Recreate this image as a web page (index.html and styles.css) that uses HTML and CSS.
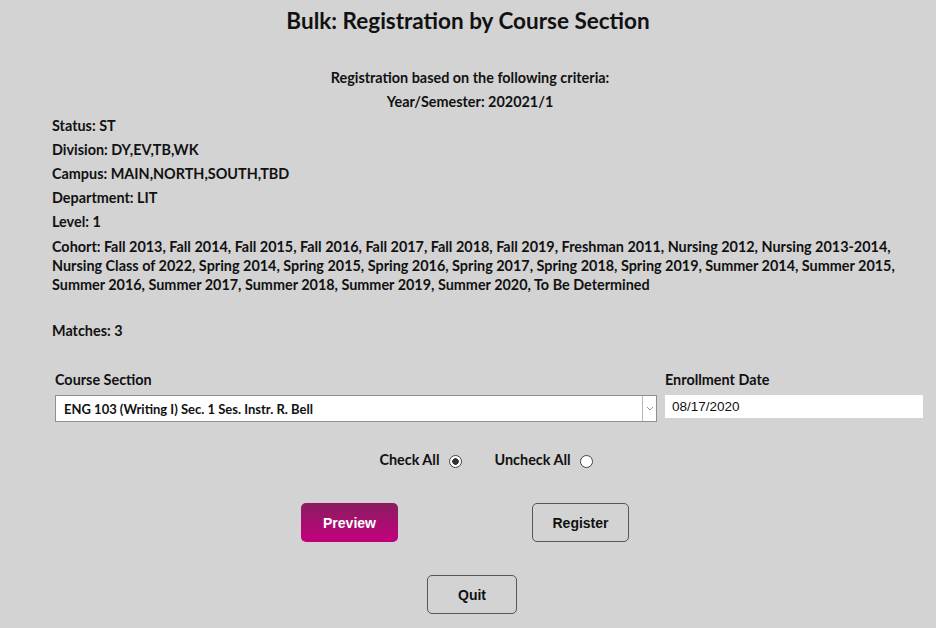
FILE: index.html
```html
<!DOCTYPE html>
<html lang="en">
<head>
<meta charset="UTF-8">
<meta name="viewport" content="width=device-width, initial-scale=1.0">
<title>Bulk: Registration by Course Section</title>
<link rel="stylesheet" href="styles.css">
</head>
<body>

<h1 class="title">Bulk: Registration by Course Section</h1>

<div class="page">
    <div class="criteria">
        <p class="center">Registration based on the following criteria:</p>
        <p class="center">Year/Semester: 202021/1</p>
        <p>Status: ST</p>
        <p>Division: DY,EV,TB,WK</p>
        <p>Campus: MAIN,NORTH,SOUTH,TBD</p>
        <p>Department: LIT</p>
        <p>Level: 1</p>
        <p class="cohort">Cohort: Fall 2013, Fall 2014, Fall 2015, Fall 2016, Fall 2017, Fall 2018, Fall 2019, Freshman 2011, Nursing 2012, Nursing 2013-2014, Nursing Class of 2022, Spring 2014, Spring 2015, Spring 2016, Spring 2017, Spring 2018, Spring 2019, Summer 2014, Summer 2015, Summer 2016, Summer 2017, Summer 2018, Summer 2019, Summer 2020, To Be Determined</p>
        <p class="matches">Matches: 3</p>
    </div>

    <form class="reg-form">
        <div class="fields">
            <div class="field field-section">
                <label for="section">Course Section</label>
                <div class="select-wrap">
                    <select id="section">
                        <option>ENG 103 (Writing I) Sec. 1 Ses. Instr. R. Bell</option>
                    </select>
                    <span class="select-arrow">
                        <svg width="8" height="5" viewBox="0 0 8 5"><path d="M1 1 L4 4 L7 1" fill="none" stroke="#9a9a9a" stroke-width="1"/></svg>
                    </span>
                </div>
            </div>
            <div class="field field-date">
                <label for="enrollDate">Enrollment Date</label>
                <input type="text" id="enrollDate" value="08/17/2020">
            </div>
        </div>

        <div class="checks">
            <label class="check">Check All <input type="radio" name="checkall" checked></label>
            <label class="check">Uncheck All <input type="radio" name="checkall"></label>
        </div>

        <div class="buttons buttons-main">
            <button type="button" class="btn btn-primary">Preview</button>
            <button type="button" class="btn">Register</button>
        </div>
        <div class="buttons buttons-quit">
            <button type="button" class="btn btn-quit">Quit</button>
        </div>
    </form>
</div>

</body>
</html>
```

FILE: styles.css
```css
body {
  margin: 0;
  padding: 0;
  background: #d3d3d3;
  font-family: Lato, "Noto Sans", sans-serif;
  font-weight: bold;
  color: #111;
}

.title {
  margin: 0;
  padding-top: 8px;
  font-size: 22.5px;
  line-height: 26px;
  text-align: center;
  font-weight: bold;
}

.page {
  padding: 0 12px 0 52px;
}

.criteria {
  margin-top: 32px;
  font-size: 14.4px;
}

.criteria p {
  margin: 0;
  line-height: 24px;
}

.criteria .center {
  text-align: center;
  padding-right: 36px;
}

.criteria .cohort {
  line-height: 19px;
  margin-top: 3px;
}

.criteria .matches {
  margin-top: 25px;
}

.reg-form {
  margin-top: 28px;
}

.fields {
  display: flex;
  gap: 8px;
  padding-left: 3px;
}

.field label {
  display: block;
  font-size: 14.4px;
  line-height: 18px;
  margin-bottom: 6px;
}

.field-section {
  width: 602px;
}

.field-date {
  width: 258px;
}

.select-wrap {
  position: relative;
}

.select-wrap select {
  appearance: none;
  -webkit-appearance: none;
  width: 100%;
  height: 27px;
  margin: 0;
  padding: 0 20px 0 8px;
  border: 1px solid #8f8f8f;
  border-radius: 0;
  background: #fff;
  font-family: Lato, "Noto Sans", sans-serif;
  font-weight: bold;
  font-size: 13px;
  color: #111;
}

.select-arrow {
  position: absolute;
  top: 1px;
  right: 1px;
  width: 13px;
  height: 25px;
  border-left: 1px solid #b5b5b5;
  display: flex;
  align-items: center;
  justify-content: center;
}

.field-date input {
  box-sizing: border-box;
  width: 100%;
  height: 23px;
  margin: 0;
  padding: 0 7px;
  border: none;
  background: #fff;
  font-family: "Liberation Sans", Arial, sans-serif;
  font-size: 13.5px;
  color: #111;
}

.checks {
  display: flex;
  justify-content: center;
  gap: 33px;
  margin-top: 29px;
  padding-right: 4px;
  font-size: 14.4px;
}

.check {
  display: flex;
  align-items: center;
  gap: 9px;
}

.check input {
  appearance: none;
  -webkit-appearance: none;
  box-sizing: border-box;
  margin: 3px 0 0 0;
  width: 13px;
  height: 13px;
  border: 1px solid #444;
  border-radius: 50%;
  background: #fff;
}

.check input:checked {
  background: radial-gradient(circle, #333 0 3px, #fff 3.5px);
}

.buttons {
  display: flex;
  justify-content: center;
}

.buttons-main {
  gap: 134px;
  margin-top: 35px;
  padding-right: 46px;
}

.buttons-quit {
  margin-top: 33px;
  padding-right: 32px;
}

.btn {
  width: 97px;
  height: 39px;
  border: 1px solid #555;
  border-radius: 5px;
  background: #d3d3d3;
  font-family: "Liberation Sans", Arial, sans-serif;
  font-size: 14px;
  font-weight: bold;
  color: #111;
  cursor: pointer;
}

.btn-primary {
  border: none;
  background: linear-gradient(#8a1d5f, #c2007e);
  color: #fff;
}

.btn-quit {
  width: 90px;
}
```
